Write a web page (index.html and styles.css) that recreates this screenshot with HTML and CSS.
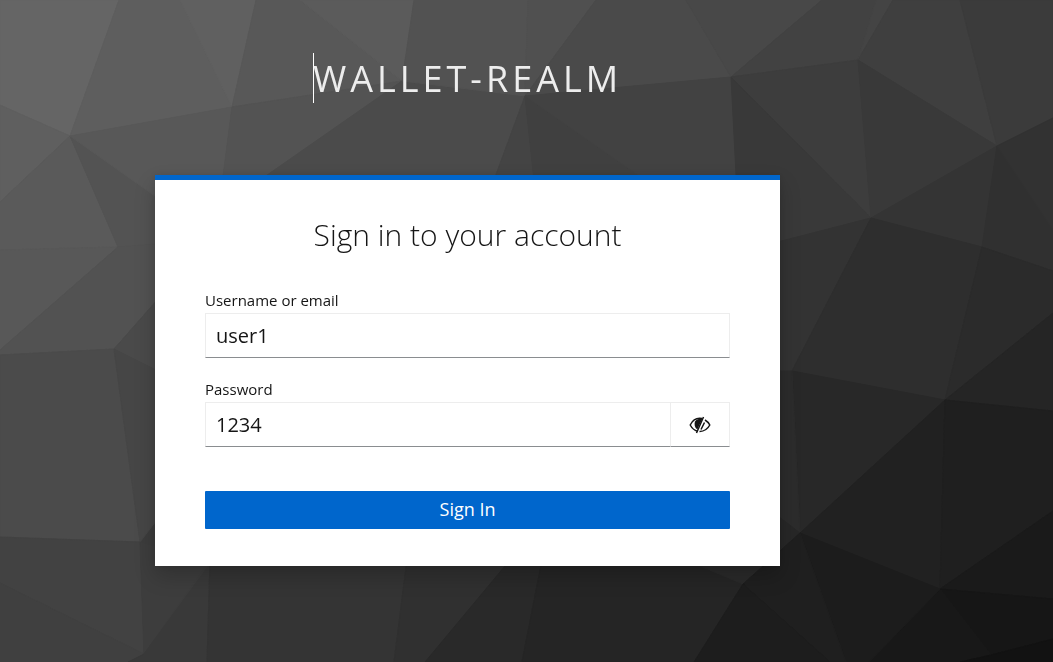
FILE: index.html
```html
<!DOCTYPE html>
<html lang="en">
<head>
<meta charset="utf-8">
<meta name="viewport" content="width=device-width, initial-scale=1">
<title>Sign in to wallet-realm</title>
<link rel="stylesheet" href="styles.css">
</head>
<body>
<svg class="backdrop" viewBox="0 0 1053 662" preserveAspectRatio="none" aria-hidden="true">
  <rect width="1053" height="662" color="#3c3c3c"/>
  <path color="#656565" d="M0 0H119L70 136L0 105z"/>
  <path color="#5e5e5e" d="M119 0H180L232 107L70 136z"/>
  <path color="#606060" d="M180 0H256L232 107z"/>
  <path color="#585858" d="M256 0H300L402 81L232 107z"/>
  <path color="#5b5b5b" d="M300 0H414L402 81z"/>
  <path color="#5f5f5f" d="M0 105L70 136L0 202z"/>
  <path color="#5a5a5a" d="M0 202L70 136L118 247L0 250z"/>
  <path color="#535353" d="M70 136L210 235V240L118 247z"/>
  <path color="#585858" d="M70 136L232 107L220 200L210 235z"/>
  <path color="#535353" d="M232 107L402 81L260 200H220z"/>
  <path color="#585858" d="M0 250L118 247L23 330L0 350z"/>
  <path color="#525252" d="M118 247L210 240L114 349L0 355V350z"/>
  <path color="#4a4a4a" d="M210 240V397L114 349z"/>
  <path color="#4b4b4b" d="M0 355L114 349L140 542L0 537z"/>
  <path color="#464646" d="M114 349L210 397V450L140 542z"/>
  <path color="#424242" d="M0 537L140 542L144 654L0 583z"/>
  <path color="#404040" d="M0 583L144 654L128 662H0z"/>
  <path color="#3d3d3d" d="M140 542L210 560L144 654z"/>
  <path color="#393939" d="M144 654L210 564L207 662H128z"/>
  <path color="#343434" d="M210 560H407L394 662H207z"/>
  <path color="#303030" d="M407 560H510L425 662H394z"/>
  <path color="#292929" d="M510 560H542L522 662H425z"/>
  <path color="#252525" d="M542 560H686L743 584L694 662H522z"/>
  <path color="#2a2a2a" d="M686 560H770L743 584z"/>
  <path color="#4b4b4b" d="M402 81L525 96L494 180H260z"/>
  <path color="#525252" d="M414 0H528L525 96L402 81z"/>
  <path color="#505050" d="M528 0H596L525 96z"/>
  <path color="#4a4a4a" d="M596 0H686L731 77L525 96z"/>
  <path color="#484848" d="M686 0H822L731 77z"/>
  <path color="#444444" d="M525 96L534 180H494z"/>
  <path color="#404040" d="M525 96L645 180H534z"/>
  <path color="#424242" d="M525 96L731 77L739 180H645z"/>
  <path color="#424242" d="M822 0H876L858 60L731 77z"/>
  <path color="#444444" d="M876 0H893L858 60z"/>
  <path color="#3f3f3f" d="M893 0H960L997 146L858 60z"/>
  <path color="#3b3b3b" d="M960 0H1053V118L997 146z"/>
  <path color="#3d3d3d" d="M731 77L858 60L871 218z"/>
  <path color="#393939" d="M731 77L871 218L740 252z"/>
  <path color="#393939" d="M858 60L997 146L871 218z"/>
  <path color="#343434" d="M871 218L997 146L982 247z"/>
  <path color="#303030" d="M997 146L1053 230V271L982 247z"/>
  <path color="#323232" d="M997 146L1053 118V230z"/>
  <path color="#333333" d="M871 218L792 371H770V244z"/>
  <path color="#2e2e2e" d="M871 218L982 247L945 400L792 371z"/>
  <path color="#2b2b2b" d="M982 247L1053 271V313L945 400z"/>
  <path color="#252525" d="M1053 313V411L945 400z"/>
  <path color="#282828" d="M792 371L945 400L800 533z"/>
  <path color="#2c2c2c" d="M770 371H792L800 533L770 510z"/>
  <path color="#272727" d="M770 510L800 533L770 560z"/>
  <path color="#212121" d="M945 400L940 589L800 533z"/>
  <path color="#1f1f1f" d="M945 400L1053 411V511L940 589z"/>
  <path color="#1a1a1a" d="M1053 511V599L940 589z"/>
  <path color="#161616" d="M940 589L1053 599V639L991 655z"/>
  <path color="#181818" d="M940 589L991 655L960 662H869z"/>
  <path color="#121212" d="M1053 639V662H960L991 655z"/>
  <path color="#1c1c1c" d="M800 533L940 589L869 662H846z"/>
  <path color="#1f1f1f" d="M743 584L800 533L846 662H830z"/>
  <path color="#1d1d1d" d="M743 584L830 662H694z"/>
</svg>
<div class="page">
  <header class="realm"><span class="caret"></span>wallet-realm</header>
  <main class="card">
    <h1 class="title">Sign in to your account</h1>
    <form class="form">
      <div class="field">
        <label class="label" for="username">Username or email</label>
        <input class="input" id="username" type="text" value="user1">
      </div>
      <div class="field">
        <label class="label" for="password">Password</label>
        <div class="group">
          <input class="input" id="password" type="text" value="1234">
          <button class="toggle" type="button" aria-label="Hide password">
            <svg class="eye" viewBox="0 0 22 18" aria-hidden="true">
              <path fill="none" stroke="#151515" stroke-width="1.5" d="M13 2.6C7.500 1.500 3.500 4.500 1.200 9C3 12.300 5.500 14.500 8.500 15.200M16 4C18 5.200 19.700 7 20.800 9C18.500 13.200 15 15.500 10.500 15.400"/>
              <path fill="#151515" d="M6 5.500C8 2.800 11 2.300 13.500 2.600L8.300 13.600C5.700 11.600 5 8.500 6 5.500z"/>
              <path stroke="#151515" stroke-width="1.500" d="M14.500 1L7.500 17M15.500 6.500L12 13.500"/>
            </svg>
          </button>
        </div>
      </div>
      <button class="submit" type="submit">Sign In</button>
    </form>
  </main>
</div>
</body>
</html>
```
FILE: styles.css
```css
* { box-sizing: border-box; }
body {
  margin: 0;
  min-height: 100vh;
  background: #3c3c3c;
  color: #151515;
  font-family: "Open Sans", "Noto Sans", sans-serif;
}
.backdrop {
  position: fixed;
  inset: 0;
  width: 100%;
  height: 100%;
  fill: currentColor;
  stroke: currentColor;
  stroke-width: 1;
  stroke-linejoin: round;
}
.page {
  position: relative;
  display: flex;
  flex-direction: column;
  align-items: center;
  padding: 53px 118px 0 0;
}
.realm {
  display: flex;
  margin-bottom: 70px;
  color: #ededed;
  font-size: 36px;
  line-height: 52px;
  letter-spacing: 4px;
  text-transform: uppercase;
}
.caret {
  width: 1px;
  height: 50px;
  margin-right: -1px;
  background: #fff;
}
.card {
  width: 100%;
  max-width: 625px;
  padding: 35px 50px 37px;
  border-top: 5px solid #06c;
  background: #fff;
  box-shadow: 0 10px 20px rgba(3, 3, 3, 0.2), 0 0 8px rgba(3, 3, 3, 0.1);
}
.title {
  margin: 0 0 37px;
  font-size: 30px;
  font-weight: 300;
  line-height: 39px;
  text-align: center;
}
.form {
  display: flex;
  flex-direction: column;
}
.field {
  display: flex;
  flex-direction: column;
  gap: 3px;
  margin-bottom: 22px;
}
.label {
  font-size: 15px;
  line-height: 19px;
}
.input {
  width: 100%;
  min-width: 0;
  height: 45px;
  padding: 0 10px;
  border: 1px solid #ededed;
  border-bottom-color: #8a8d90;
  border-radius: 0;
  outline: 0;
  background: #fff;
  color: #151515;
  font-family: inherit;
  font-size: 20px;
}
.group {
  display: flex;
}
.toggle {
  display: flex;
  flex: none;
  align-items: center;
  justify-content: center;
  width: 59px;
  padding: 0;
  border: 1px solid #ededed;
  border-left: 0;
  border-bottom-color: #8a8d90;
  background: #fff;
}
.eye {
  width: 22px;
  height: 18px;
}
.submit {
  height: 38px;
  margin-top: 22px;
  padding: 0 0 2px;
  border: 0;
  border-radius: 1px;
  background: #06c;
  color: #fff;
  font-family: inherit;
  font-size: 18px;
}
```
